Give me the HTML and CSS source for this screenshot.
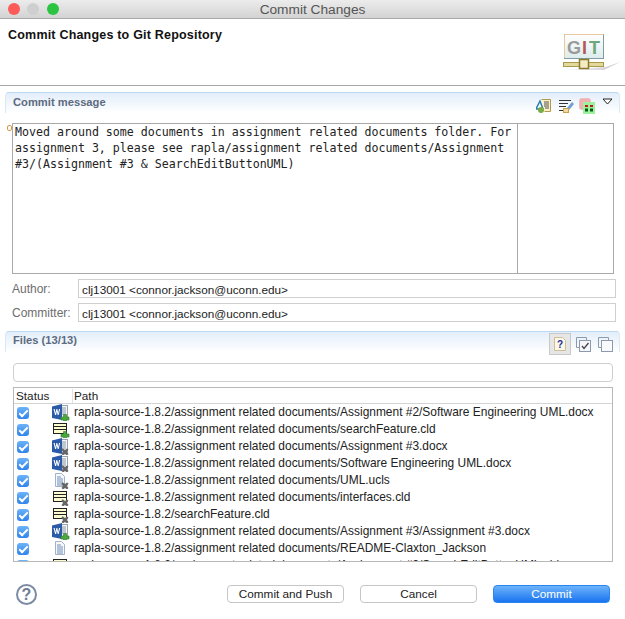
FILE: index.html
```html
<!DOCTYPE html>
<html lang="en">
<head>
    <meta charset="UTF-8">
    <meta name="viewport" content="width=device-width, initial-scale=1.0">
    <title>Commit Changes</title>
    <link rel="stylesheet" href="styles.css">
</head>
<body>
    <svg class="defs" width="0" height="0">
        <defs>
            <g id="word">
                <rect x="8.500" y="1.500" width="7" height="13" fill="#f4f6f8" stroke="#9aa3ad"/>
                <path d="M10 4h4M10 6h4M10 8h4M10 10h4" stroke="#8d98a6"/>
                <path d="M0 2.500 10 0v16L0 14z" fill="#2a5aa8"/>
                <path d="M1.500 5h1.200l.8 4 .9-4h.9l.9 4 .8-4h1.100l-1.400 6h-1l-.8-3.500-.8 3.500h-1z" fill="#fff"/>
            </g>
            <g id="class">
                <rect x="1.500" y="2.500" width="13" height="10" fill="#fdfbd0" stroke="#222"/>
                <path d="M2 5.500h12M2 8.500h12" stroke="#222"/>
            </g>
            <g id="page">
                <path d="M3.500 1.500h6l3 3v10h-9z" fill="#f6f8fb" stroke="#a3b0c6"/>
                <path d="M5 5h4M5 7h6M5 9h6M5 11h6M5 13h6" stroke="#6f8fbe"/>
            </g>
            <g id="plus">
                <path d="M11.500 10.500h3V13H17v3h-2.500v1.500h-3V16H9v-3h2.500z" fill="#4aa83f" stroke="#2f7a2a" stroke-width=".6"/>
            </g>
            <g id="cross">
                <path d="M10 10.500l1 0 2 1.500 2-1.500 1.500 1L15 14l1.500 2-1.500 1.500-2-1.500-2 1.500-1.500-1.500L11 14l-1.500-2z" fill="#666"/>
            </g>
        </defs>
    </svg>

    <div class="window">
        <div class="titlebar">
            <div class="lights">
                <span class="light red"></span>
                <span class="light grey"></span>
                <span class="light green"></span>
            </div>
            <div class="title">Commit Changes</div>
        </div>

        <div class="banner">
            <h1>Commit Changes to Git Repository</h1>
            <svg class="git-logo" width="60" height="40" viewBox="0 0 60 40">
                <defs>
                    <linearGradient id="gitshadow" x1="0" x2="1" y1="0" y2="0">
                        <stop offset="0" stop-color="#fff"/>
                        <stop offset="1" stop-color="#c9c4cc"/>
                    </linearGradient>
                    <linearGradient id="gitface" x1="0" x2="0" y1="0" y2="1">
                        <stop offset="0" stop-color="#fff"/>
                        <stop offset="1" stop-color="#dcecec"/>
                    </linearGradient>
                </defs>
                <path d="M0 36H42L58 28 44 33z" fill="url(#gitshadow)"/>
                <rect x="2.500" y="0.500" width="39" height="24" fill="url(#gitface)" stroke="#7f9da0"/>
                <path d="M2.500 24V.500h39" fill="none" stroke="#e8c8a0"/>
                <text class="git-word" x="5" y="20"><tspan fill="#9a9a9a">G</tspan><tspan fill="#b8555c" x="20">I</tspan><tspan fill="#6fa67c" x="27">T</tspan></text>
                <rect x="1.500" y="28.500" width="40" height="4" fill="#e2d99a" stroke="#a79a4a"/>
                <rect x="17.500" y="25.500" width="9" height="9" fill="#f5ecc4" stroke="#8a7a30" stroke-width="1.500"/>
            </svg>
        </div>

        <div class="content">
            <div class="section-head message-head">
                <span class="section-title">Commit message</span>
                <div class="tools">
                    <svg class="tool-first" width="15" height="16" viewBox="0 0 15 16">
                        <path d="M5.500 1.500h9v12h-6" fill="#f8f0c8" stroke="#b59a4a"/>
                        <path d="M8 4h5M8 6h5M8 8h5M9 10h4" stroke="#555"/>
                        <path d="M0 11 4 3l3 8z" fill="none" stroke="#2a7fa8" stroke-width="1.500"/>
                        <circle cx="5" cy="12" r="3" fill="#7cab45"/>
                    </svg>
                    <svg width="15" height="16" viewBox="0 0 15 16">
                        <path d="M0 2.500h12M0 5.500h9M0 8.500h7M0 12.500h4" stroke="#333"/>
                        <path d="M8 10 13 4l2 2-5 6z" fill="#6f9fd8"/>
                        <rect x="4.500" y="10.500" width="5" height="4" fill="#f3d89a" stroke="#c9a050"/>
                    </svg>
                    <svg width="16" height="16" viewBox="0 0 16 16">
                        <rect x="0.500" y="0.500" width="11" height="11" rx="2" fill="#f3b0b0" stroke="#eac0c0"/>
                        <rect x="4" y="4" width="12" height="12" fill="#9cf29c"/>
                        <path d="M6 8h3M11 8h3" stroke="#c01818" stroke-width="2"/>
                        <path d="M6 12h3M11 12h3" stroke="#0b5a18" stroke-width="3"/>
                    </svg>
                    <svg class="chevron" width="11" height="7" viewBox="0 0 11 7">
                        <path d="M1 1h9L5.500 6z" fill="#fff" stroke="#222"/>
                    </svg>
                </div>
            </div>

            <div class="message-box">
                <span class="hint-bulb"></span>
                <div class="message-text">Moved around some documents in assignment related documents folder. For
assignment 3, please see rapla/assignment related documents/Assignment
#3/(Assignment #3 &amp; SearchEditButtonUML)</div>
                <div class="message-side"></div>
            </div>

            <div class="person-row">
                <label>Author:</label>
                <div class="field">clj13001 &lt;connor.jackson@uconn.edu&gt;</div>
            </div>
            <div class="person-row">
                <label>Committer:</label>
                <div class="field">clj13001 &lt;connor.jackson@uconn.edu&gt;</div>
            </div>

            <div class="section-head files-head">
                <span class="section-title">Files (13/13)</span>
                <div class="tools files-tools">
                    <span class="tool-on">
                        <svg width="14" height="16" viewBox="0 0 14 16">
                            <path d="M1.500 1.500h8l3 3v10h-11z" fill="#fbf7e6" stroke="#cdbf92"/>
                            <text class="q-mark" x="4" y="12">?</text>
                        </svg>
                    </span>
                    <svg width="15" height="15" viewBox="0 0 15 15">
                        <path d="M3.500 10.500h-3v-10h10v3" fill="none" stroke="#8d9aae"/>
                        <rect x="3.500" y="3.500" width="11" height="11" fill="#f4f6fa" stroke="#8d9aae"/>
                        <path d="M6 9l2 2.500L12.500 6" fill="none" stroke="#444" stroke-width="1.300"/>
                    </svg>
                    <svg class="tool-last" width="15" height="15" viewBox="0 0 15 15">
                        <path d="M3.500 10.500h-3v-10h10v3" fill="none" stroke="#8d9aae"/>
                        <rect x="3.500" y="3.500" width="11" height="11" fill="#f8f9fc" stroke="#8d9aae"/>
                    </svg>
                </div>
            </div>

            <div class="filter-box"></div>

            <div class="file-table">
                <div class="file-header">
                    <span class="col-status">Status</span>
                    <span class="col-path">Path</span>
                </div>
                <div class="file-row">
                    <span class="check"></span>
                    <svg class="file-icon" width="18" height="17" viewBox="0 0 18 17"><use href="#word"/><use href="#plus"/></svg>
                    <span class="file-path">rapla-source-1.8.2/assignment related documents/Assignment #2/Software Engineering UML.docx</span>
                </div>
                <div class="file-row">
                    <span class="check"></span>
                    <svg class="file-icon" width="18" height="17" viewBox="0 0 18 17"><use href="#class"/><use href="#plus"/></svg>
                    <span class="file-path">rapla-source-1.8.2/assignment related documents/searchFeature.cld</span>
                </div>
                <div class="file-row">
                    <span class="check"></span>
                    <svg class="file-icon" width="18" height="17" viewBox="0 0 18 17"><use href="#word"/><use href="#cross"/></svg>
                    <span class="file-path">rapla-source-1.8.2/assignment related documents/Assignment #3.docx</span>
                </div>
                <div class="file-row">
                    <span class="check"></span>
                    <svg class="file-icon" width="18" height="17" viewBox="0 0 18 17"><use href="#word"/><use href="#cross"/></svg>
                    <span class="file-path">rapla-source-1.8.2/assignment related documents/Software Engineering UML.docx</span>
                </div>
                <div class="file-row">
                    <span class="check"></span>
                    <svg class="file-icon" width="18" height="17" viewBox="0 0 18 17"><use href="#page"/><use href="#cross"/></svg>
                    <span class="file-path">rapla-source-1.8.2/assignment related documents/UML.ucls</span>
                </div>
                <div class="file-row">
                    <span class="check"></span>
                    <svg class="file-icon" width="18" height="17" viewBox="0 0 18 17"><use href="#class"/><use href="#cross"/></svg>
                    <span class="file-path">rapla-source-1.8.2/assignment related documents/interfaces.cld</span>
                </div>
                <div class="file-row">
                    <span class="check"></span>
                    <svg class="file-icon" width="18" height="17" viewBox="0 0 18 17"><use href="#class"/><use href="#cross"/></svg>
                    <span class="file-path">rapla-source-1.8.2/searchFeature.cld</span>
                </div>
                <div class="file-row">
                    <span class="check"></span>
                    <svg class="file-icon" width="18" height="17" viewBox="0 0 18 17"><use href="#word"/><use href="#plus"/></svg>
                    <span class="file-path">rapla-source-1.8.2/assignment related documents/Assignment #3/Assignment #3.docx</span>
                </div>
                <div class="file-row">
                    <span class="check"></span>
                    <svg class="file-icon" width="18" height="17" viewBox="0 0 18 17"><use href="#page"/></svg>
                    <span class="file-path">rapla-source-1.8.2/assignment related documents/README-Claxton_Jackson</span>
                </div>
                <div class="file-row">
                    <span class="check"></span>
                    <svg class="file-icon" width="18" height="17" viewBox="0 0 18 17"><use href="#class"/><use href="#plus"/></svg>
                    <span class="file-path">rapla-source-1.8.2/assignment related documents/Assignment #3/SearchEditButtonUML.cld</span>
                </div>
            </div>

            <div class="footer">
                <span class="help">?</span>
                <div class="buttons">
                    <button class="btn">Commit and Push</button>
                    <button class="btn">Cancel</button>
                    <button class="btn btn-primary">Commit</button>
                </div>
            </div>
        </div>
    </div>
</body>
</html>
```
FILE: styles.css
```css
html, body {
    margin: 0;
    padding: 0;
}

body {
    font-family: "Liberation Sans", Arial, sans-serif;
    font-size: 11px;
    color: #222;
    background-color: #fff;
}

.defs {
    display: block;
    height: 0;
}

.window {
    width: 625px;
    height: 619px;
    overflow: hidden;
}

.titlebar {
    display: flex;
    align-items: center;
    height: 18px;
    background: linear-gradient(#ececec, #d3d3d3);
    border-bottom: 1px solid #a8a8a8;
}

.lights {
    display: flex;
    gap: 7px;
    width: 60px;
    margin-left: 8px;
}

.light {
    width: 12px;
    height: 12px;
    border-radius: 50%;
}

.red { background-color: #fc5b57; }
.grey { background-color: #cfcfcf; }
.green { background-color: #2ac440; margin-left: 1px; }

.title {
    flex: 1;
    margin-right: 68px;
    text-align: center;
    font-size: 13.700px;
    color: #555;
}

.banner {
    display: flex;
    justify-content: space-between;
    height: 66px;
    background-color: #fff;
    border-bottom: 1px solid #a8a8a8;
}

h1 {
    margin: 9px 0 0 8px;
    font-size: 12.500px;
    line-height: 15px;
    letter-spacing: 0.2px;
    color: #111;
}

.git-logo {
    margin: 15px 3px 0 0;
}

.git-word {
    font-family: "Liberation Sans", Arial, sans-serif;
    font-weight: bold;
    font-size: 18px;
}

.content {
    padding: 6px 0 0;
}

.section-head {
    display: flex;
    justify-content: space-between;
    align-items: flex-start;
    height: 20px;
    margin: 0 5px;
    padding: 0 6px 0 7px;
    border-top: 1px solid #bcd8f2;
    border-left: 1px solid #dbe9f6;
    border-right: 1px solid #dbe9f6;
    border-radius: 4px 4px 0 0;
    background: linear-gradient(#e3eefa, #fff);
}

.section-title {
    margin-top: 3px;
    font-weight: bold;
    font-size: 11.200px;
    line-height: 13px;
    color: #5d6b80;
}

.files-head .section-title {
    margin-top: 2px;
}

.tools {
    display: flex;
    align-items: center;
    gap: 5px;
    margin-top: 5px;
}

.tool-first {
    margin-right: 3px;
}

.chevron {
    margin: 0 0 9px 2px;
}

.files-tools {
    margin-top: 1px;
}

.tool-last {
    margin-left: 2px;
}

.message-box {
    display: flex;
    position: relative;
    height: 149px;
    margin: 10px 11px 0 12px;
    border: 1px solid #a9a9a9;
}

.hint-bulb {
    position: absolute;
    left: -6px;
    top: 1px;
    width: 3px;
    height: 4px;
    border: 1px solid #d69a4a;
    border-radius: 2px;
}

.message-text {
    width: 502px;
    padding: 0 0 0 2px;
    font-family: "DejaVu Sans Mono", monospace;
    font-size: 11.620px;
    line-height: 16px;
    white-space: pre;
}

.message-side {
    flex: 1;
    border-left: 1px solid #a9a9a9;
}

.person-row {
    display: flex;
    align-items: center;
    height: 19px;
    margin: 5px 9px 0 12px;
}

.person-row label {
    width: 66px;
    color: #6d6d6d;
    font-size: 12px;
}

.field {
    flex: 1;
    height: 16px;
    padding: 1px 0 0 3px;
    line-height: 17px;
    border: 1px solid #cfcfcf;
    color: #222;
    font-size: 11.750px;
}

.files-head {
    margin-top: 9px;
}

.tool-on {
    display: flex;
    align-items: center;
    justify-content: center;
    width: 22px;
    height: 22px;
    background-color: #e6e6e6;
    border: 1px solid #c8c8c8;
    box-sizing: border-box;
}

.q-mark {
    font-family: "Liberation Sans", Arial, sans-serif;
    font-weight: bold;
    font-size: 10px;
    fill: #1a2fa0;
}

.filter-box {
    height: 17px;
    margin: 11px 12px 0 13px;
    border: 1px solid #cfcfcf;
    border-radius: 4px;
}

.file-table {
    height: 173px;
    margin: 5px 12px 0 13px;
    border: 1px solid #b8b8b8;
    overflow: hidden;
}

.file-header {
    display: flex;
    align-items: center;
    height: 15px;
    border-bottom: 1px solid #d4d4d4;
    font-size: 11.750px;
    line-height: 13px;
}

.col-status {
    width: 56px;
    padding: 0 0 1px 2px;
}

.col-path {
    flex: 1;
    padding: 0 0 1px 1px;
    border-left: 1px solid #e2e2e2;
}

.file-row {
    display: flex;
    align-items: center;
    height: 17px;
}

.check {
    position: relative;
    width: 12px;
    height: 12px;
    margin-left: 3px;
    border-radius: 3px;
    background: linear-gradient(#6db3f8, #2f83ec);
}

.check::after {
    content: "";
    position: absolute;
    left: 4px;
    top: 1px;
    width: 3px;
    height: 7px;
    border: solid #fff;
    border-width: 0 2px 2px 0;
    transform: rotate(45deg);
}

.file-icon {
    margin-left: 23px;
    flex-shrink: 0;
}

.file-path {
    margin-left: 4px;
    padding-bottom: 2px;
    white-space: nowrap;
    font-size: 11.950px;
}

.footer {
    display: flex;
    justify-content: space-between;
    align-items: center;
    height: 22px;
    margin: 21px 15px 0 16px;
}

.help {
    width: 17px;
    height: 17px;
    line-height: 17px;
    text-align: center;
    border: 2px solid #7c8ba3;
    border-radius: 50%;
    color: #6f7d92;
    font-weight: bold;
    font-size: 16px;
}

.buttons {
    display: flex;
    gap: 16px;
}

.btn {
    width: 117px;
    height: 18px;
    padding: 0 0 2px;
    border: 1px solid #c6c6c6;
    border-radius: 4px;
    background-color: #fff;
    font-family: "Liberation Sans", Arial, sans-serif;
    font-size: 11.750px;
    color: #222;
}

.btn-primary {
    border-color: #2b84f2;
    background: linear-gradient(#6cb3fa, #1a74f0);
    color: #fff;
}
```
